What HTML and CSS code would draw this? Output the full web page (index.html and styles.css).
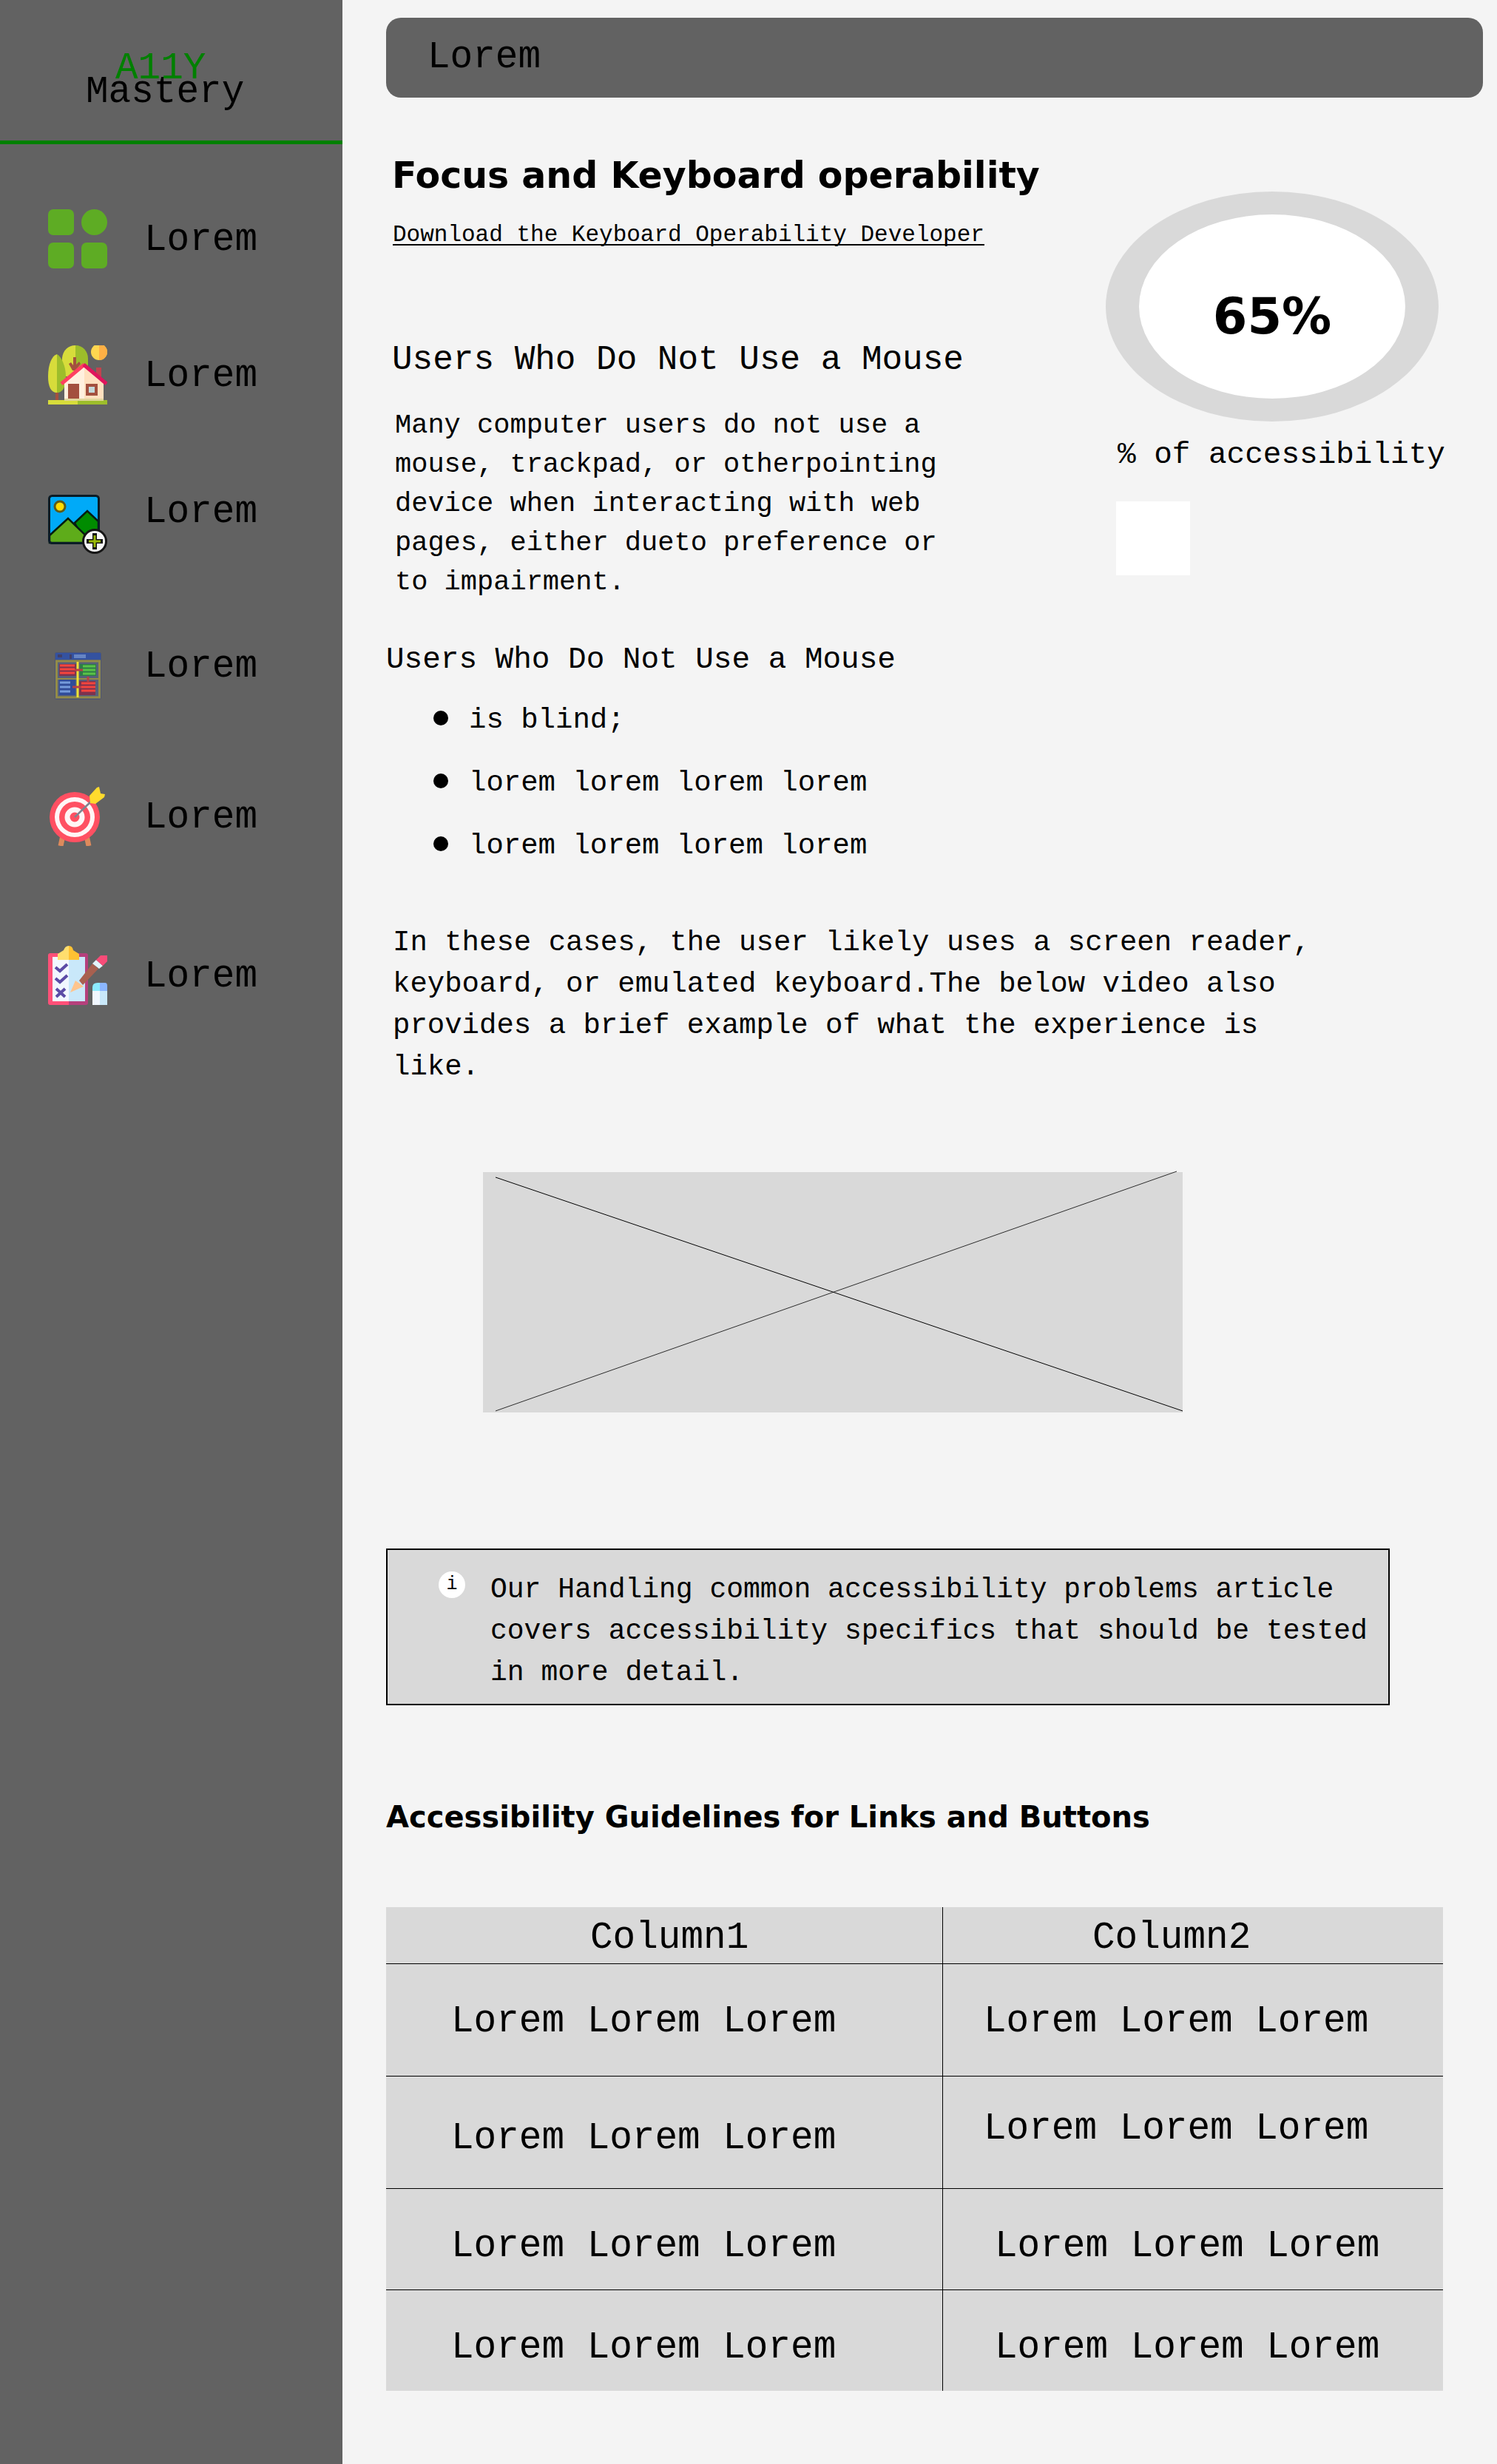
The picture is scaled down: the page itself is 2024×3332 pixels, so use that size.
FILE: index.html
```html
<!DOCTYPE html>
<html lang="en">
<head>
<meta charset="utf-8">
<meta name="viewport" content="width=device-width, initial-scale=1">
<title>A11Y Mastery</title>
<link rel="stylesheet" href="styles.css">
</head>
<body>
<div class="layout">
  <aside class="sidebar">
    <div class="brand">
      <span class="brand-top">A11Y</span>
      <span class="brand-name">Mastery</span>
    </div>
    <nav aria-label="Main">
      <ul class="menu">
        <li><a class="menu-link" href="#">
          <svg class="icon" viewBox="0 0 80 80" aria-hidden="true" fill="#5eac24">
            <rect width="35" height="35" rx="7"/><circle cx="62.500" cy="17.500" r="17.500"/>
            <rect y="45" width="35" height="35" rx="7"/><rect x="45" y="45" width="35" height="35" rx="7"/>
          </svg>
          <span>Lorem</span></a></li>
        <li><a class="menu-link" href="#">
          <svg class="icon" viewBox="0 0 80 80" aria-hidden="true">
            <path fill="#d7dc3b" d="M37 0c-10 0-17 7-18 17v25h18z"/>
            <path fill="#9dbd2b" d="M37 0c10 0 17 8 17 18v25H37z"/>
            <path fill="#d7dc3b" d="M12 12C5 14 0 26 0 42c0 14 4 22 12 22z"/>
            <path fill="#9dbd2b" d="M12 12c6 3 12 16 12 30 0 14-4 22-12 22z"/>
            <path fill="#a3503e" d="M10 64h4v12h-4zM34 16h4v10l4-4 2 3-7 9h-4l-5-9 3-2 3 4z"/>
            <circle cx="69" cy="9" r="11" fill="#ffd650"/><path fill="#ffb045" d="M69-2a11 11 0 0 1 0 22z"/>
            <path fill="#c1434f" d="M65 30h7v18h-7z"/>
            <path fill="#fff0de" d="M22 50 49 27v48H22z"/><path fill="#ffe0bf" d="m49 27 26 23v25H49z"/>
            <path fill="none" stroke="#ff4060" stroke-width="5" d="M18 52 49 26"/>
            <path fill="none" stroke="#e0145c" stroke-width="5" d="m48 26 31 26"/>
            <path fill="#a3503e" d="M27 52h15v24H27zM51 52h16v16H51z"/><path fill="#c5d8d8" d="M55 56h8v8h-8z"/>
            <path fill="#d7dc3b" d="M0 74h40v6H0z"/><path fill="#9dbd2b" d="M40 74h40v6H40z"/>
            <path fill="#e0d69b" d="M22 72h53v3H22z"/>
          </svg>
          <span>Lorem</span></a></li>
        <li><a class="menu-link" href="#">
          <svg class="icon icon-low" viewBox="0 0 80 80" aria-hidden="true">
            <rect x="1.500" y="1.500" width="67" height="64" rx="4" fill="#00aaf8"/>
            <path fill="#008c00" stroke="#051c10" stroke-width="2.500" d="M36 38 53 22l15 14v29H50z"/>
            <path fill="#5eac1a" stroke="#051c10" stroke-width="2.500" d="M2 55 27 32l27 26v7H2z"/>
            <rect x="1.500" y="1.500" width="67" height="64" rx="4" fill="none" stroke="#0b1c26" stroke-width="3"/>
            <circle cx="16" cy="16" r="7" fill="#ffdc00" stroke="#5c5a18" stroke-width="3"/>
            <circle cx="63" cy="63" r="15.500" fill="#f6f6f6" stroke="#151515" stroke-width="3"/>
            <path stroke="#111" stroke-width="6" d="M63 52v22M52 63h22"/>
            <path stroke="#9aba08" stroke-width="3" d="M63 55v16M55 63h16"/>
          </svg>
          <span>Lorem</span></a></li>
        <li><a class="menu-link" href="#">
          <svg class="icon icon-mid" viewBox="0 0 80 80" aria-hidden="true">
            <rect x="9" y="9" width="63" height="64" rx="3" fill="#4d5573"/>
            <path fill="#3452a0" d="M10 10h61v9H10z"/><path fill="#6685c4" d="M35 12h16v5H35z"/>
            <path fill="#40406a" d="M13 12h6v4h-6zM29 12h3v6h-3z"/>
            <rect x="11.500" y="21" width="58" height="49" fill="#56607a" stroke="#938c48" stroke-width="3"/>
            <path fill="#7d334e" d="M15 25h23v16H15zM42 48h22v19H42z"/>
            <path fill="#2e7c47" d="M43 25h22v16H43z"/><path fill="#304c99" d="M15 46h22v21H15z"/>
            <path stroke="#f5453d" stroke-width="3" d="M16 27h20M16 32h20M16 37h20M45 51h19M45 56h19M45 61h19"/>
            <path stroke="#5ac247" stroke-width="3" d="M47 28h17M47 33h17M47 38h17"/>
            <path stroke="#759bdb" stroke-width="3" d="M16 50h14M16 56h14M16 62h14"/>
            <path stroke="#938c48" stroke-width="2" d="M12 45h57"/>
            <path stroke="#f2e333" stroke-width="3" d="M40 22v48"/>
            <path stroke="#b64047" stroke-width="3" d="M36 33h11M33 56h12M54 42v8"/>
          </svg>
          <span>Lorem</span></a></li>
        <li><a class="menu-link" href="#">
          <svg class="icon" viewBox="0 0 80 80" aria-hidden="true">
            <path stroke="#dd8a5c" stroke-width="7" d="m20 66-3 14M52 66l3 14"/>
            <circle cx="36" cy="41" r="34" fill="#ff5062"/><circle cx="36" cy="41" r="27" fill="#fff5f6"/>
            <circle cx="36" cy="41" r="21" fill="#ff5062"/><circle cx="36" cy="41" r="13.500" fill="#fff5f6"/>
            <circle cx="36" cy="41" r="6.500" fill="#ff5062"/>
            <path stroke="#7d8490" stroke-width="2.500" d="m36 41 24-23"/>
            <path fill="#ffdb2d" d="M56 12 66 1l3-1 2 9 6 1-1 4-12 9-7-1z"/>
          </svg>
          <span>Lorem</span></a></li>
        <li><a class="menu-link" href="#">
          <svg class="icon" viewBox="0 0 80 80" aria-hidden="true">
            <path fill="#ff5078" d="M3 10h25v70H3q-3 0-3-3V13q0-3 3-3z"/><path fill="#b5407c" d="M28 10h23q3 0 3 3v64q0 3-3 3H28z"/>
            <path fill="#f1f7ff" d="M6 15h22v60H6z"/><path fill="#c9e8fa" d="M28 15h22v60H28z"/>
            <path fill="#ffde6e" d="M13 19v-8l8-5q2-6 7-6v19z"/><path fill="#ffc233" d="M42 19v-8l-8-5q-1-6-6-6v19z"/>
            <path fill="none" stroke="#5b4ba6" stroke-width="4" d="m10 29 6 5 10-9M10 44l6 5 10-9M11 58l12 11M23 58 11 69"/>
            <path fill="#a8604f" d="m42 47 18-23 8 7-21 22z"/><path fill="#ffc58e" d="m30 63 7-16 11 8z"/>
            <path fill="#e3f4fb" d="m60 24 5-5 9 8-5 4z"/><path fill="#f84c78" d="m65 19 6-6h9v8l-6 6z"/>
            <path fill="#8cecff" d="M60 61v-5q0-6 7-6h3v11z"/><path fill="#8bb6ff" d="M70 50h7q3 0 3 4v7H70z"/>
            <path fill="#f1f7ff" d="M60 61h10v19H60z"/><path fill="#c9e8fa" d="M70 61h10v19H70z"/>
          </svg>
          <span>Lorem</span></a></li>
      </ul>
    </nav>
  </aside>

  <main class="content">
    <header class="topbar">Lorem</header>

    <div class="hero">
      <section class="intro">
        <h1 class="title">Focus and Keyboard operability</h1>
        <a class="download" href="#">Download the Keyboard Operability Developer</a>
        <h2 class="lead">Users Who Do Not Use a Mouse</h2>
        <p class="summary">Many computer users do not use a mouse, trackpad, or otherpointing device when interacting with web pages, either dueto preference or to impairment.</p>
        <h3 class="list-title">Users Who Do Not Use a Mouse</h3>
        <ul class="reasons">
          <li>is blind;</li>
          <li>lorem lorem lorem lorem</li>
          <li>lorem lorem lorem lorem</li>
        </ul>
      </section>
      <section class="score">
        <div class="gauge">65%</div>
        <p class="score-label">% of accessibility</p>
        <div class="swatch"></div>
      </section>
    </div>

    <p class="note">In these cases, the user likely uses a screen reader, keyboard, or emulated keyboard.The below video also provides a brief example of what the experience is like.</p>

    <svg class="video" viewBox="0 0 946 325" role="img" aria-label="Video placeholder">
      <rect width="946" height="325" fill="#d9d9d9"/>
      <path d="M17 7 946 323" stroke="#000"/>
      <path d="M17 323 938-1" stroke="#000" stroke-opacity=".8"/>
    </svg>

    <div class="callout">
      <span class="callout-icon">i</span>
      <p class="callout-text">Our Handling common accessibility problems article covers accessibility specifics that should be tested in more detail.</p>
    </div>

    <h2 class="subtitle">Accessibility Guidelines for Links and Buttons</h2>

    <table class="guide">
      <thead>
        <tr><th scope="col">Column1</th><th scope="col">Column2</th></tr>
      </thead>
      <tbody>
        <tr><td>Lorem Lorem Lorem</td><td>Lorem Lorem Lorem</td></tr>
        <tr class="split"><td>Lorem Lorem Lorem</td><td>Lorem Lorem Lorem</td></tr>
        <tr class="short"><td>Lorem Lorem Lorem</td><td>Lorem Lorem Lorem</td></tr>
        <tr class="short"><td>Lorem Lorem Lorem</td><td>Lorem Lorem Lorem</td></tr>
      </tbody>
    </table>
  </main>
</div>
</body>
</html>
```
FILE: styles.css
```css
* {
  box-sizing: border-box;
}

body {
  margin: 0;
  background: #f4f4f4;
  color: #000;
  font-family: "Liberation Mono", monospace;
}

h1, h2, h3, p, ul {
  margin: 0;
  padding: 0;
  font-weight: 400;
}

ul {
  list-style: none;
}

.layout {
  display: flex;
  min-height: 100vh;
}

/* Sidebar */
.sidebar {
  flex: none;
  width: 463px;
  background: #626262;
  font-size: 51px;
}

.brand {
  display: flex;
  flex-direction: column;
  padding: 77px 0 49px 116px;
  border-bottom: 5px solid #008000;
  line-height: 32px;
}

.brand-top {
  padding-left: 40px;
  color: #008000;
}

.menu {
  display: flex;
  flex-direction: column;
  padding: 88px 0 0 65px;
}

.menu li {
  margin-bottom: 100px;
}

.menu li:nth-child(3),
.menu li:nth-child(4) {
  margin-bottom: 111px;
}

.menu li:nth-child(5) {
  margin-bottom: 131px;
}

.menu-link {
  display: flex;
  align-items: flex-start;
  gap: 50px;
  color: #000;
  line-height: 84px;
  text-decoration: none;
}

.icon {
  flex: none;
  width: 80px;
  height: 80px;
}

.icon-low {
  margin-top: 18px;
}

.icon-mid {
  margin-top: 13px;
}

/* Content */
.content {
  flex: 1;
  min-width: 0;
  padding: 24px 19px 100px 59px;
}

.topbar {
  padding: 0 56px;
  border-radius: 20px;
  background: #626262;
  font-size: 51px;
  line-height: 108px;
}

.hero {
  display: flex;
  justify-content: space-between;
  padding-right: 60px;
}

.intro {
  padding-top: 76px;
}

.title,
.subtitle {
  font-family: "DejaVu Sans", sans-serif;
  font-weight: 700;
  line-height: 60px;
}

.title {
  padding-left: 8px;
  font-size: 49px;
}

.download {
  display: block;
  width: fit-content;
  margin: 30px 0 0 9px;
  color: #000;
  font-size: 31px;
  line-height: 40px;
  text-decoration-thickness: 2px;
  text-underline-offset: 4px;
  text-decoration-skip-ink: none;
}

.lead {
  margin-top: 119px;
  padding-left: 8px;
  font-size: 46px;
  line-height: 60px;
}

.summary {
  max-width: 760px;
  margin-top: 32px;
  padding-left: 12px;
  font-size: 37px;
  line-height: 53px;
}

.list-title {
  margin-top: 48px;
  font-size: 41px;
  line-height: 60px;
}

.reasons {
  margin-top: 10px;
  padding-left: 64px;
  font-size: 39px;
  line-height: 85px;
}

.reasons li {
  display: flex;
  align-items: center;
  gap: 28px;
}

.reasons li::before {
  width: 20px;
  height: 20px;
  margin-bottom: 8px;
  border-radius: 50%;
  background: #000;
  content: "";
}

.score {
  flex: none;
  width: 450px;
  padding-top: 127px;
}

.gauge {
  height: 311px;
  padding-top: 6px;
  border: solid #d9d9d9;
  border-width: 31px 45px;
  border-radius: 50%;
  background: #fff;
  font: 700 67px/265px "DejaVu Sans", sans-serif;
  text-align: center;
}

.score-label {
  margin-top: 15px;
  padding-left: 16px;
  font-size: 41px;
  line-height: 60px;
  white-space: nowrap;
}

.swatch {
  width: 100px;
  height: 100px;
  margin: 33px 0 0 14px;
  background: #fff;
}

.note {
  max-width: 1260px;
  margin-top: 60px;
  padding-left: 9px;
  font-size: 39px;
  line-height: 56px;
}

.video {
  display: block;
  width: 100%;
  max-width: 946px;
  margin: 114px 0 0 131px;
  overflow: visible;
}

.callout {
  display: flex;
  gap: 34px;
  margin: 184px 126px 0 0;
  padding: 26px 20px 14px 69px;
  border: 2px solid #000;
  background: #d9d9d9;
}

.callout-icon {
  flex: none;
  width: 36px;
  height: 36px;
  margin-top: 3px;
  border-radius: 50%;
  background: #fff;
  font-size: 25px;
  line-height: 36px;
  text-align: center;
}

.callout-text {
  font-size: 38px;
  line-height: 56px;
}

.subtitle {
  margin-top: 121px;
  font-size: 40px;
}

.guide {
  width: calc(100% - 54px);
  margin-top: 92px;
  border-collapse: separate;
  border-spacing: 0;
  table-layout: fixed;
  background: #d9d9d9;
  font-size: 51px;
  line-height: 60px;
}

.guide th,
.guide td {
  padding: 48px 0 43px 88px;
  border-bottom: 1px solid #000;
  font-weight: 400;
  text-align: left;
  vertical-align: top;
}

.guide th:first-child {
  width: 753px;
}

.guide th:first-child,
.guide td:first-child {
  border-right: 1px solid #000;
}

.guide td + td {
  padding-left: 55px;
}

.guide th {
  padding: 12px 0 4px 276px;
}

.guide th + th {
  padding-left: 202px;
}

.guide .split td {
  padding: 54px 0 37px 88px;
}

.guide .split td + td {
  padding: 41px 0 50px 55px;
}

.guide .short td {
  padding-bottom: 28px;
}

.guide .short td + td {
  padding-left: 70px;
}

.guide tr:last-child td {
  border-bottom: 0;
}
```
